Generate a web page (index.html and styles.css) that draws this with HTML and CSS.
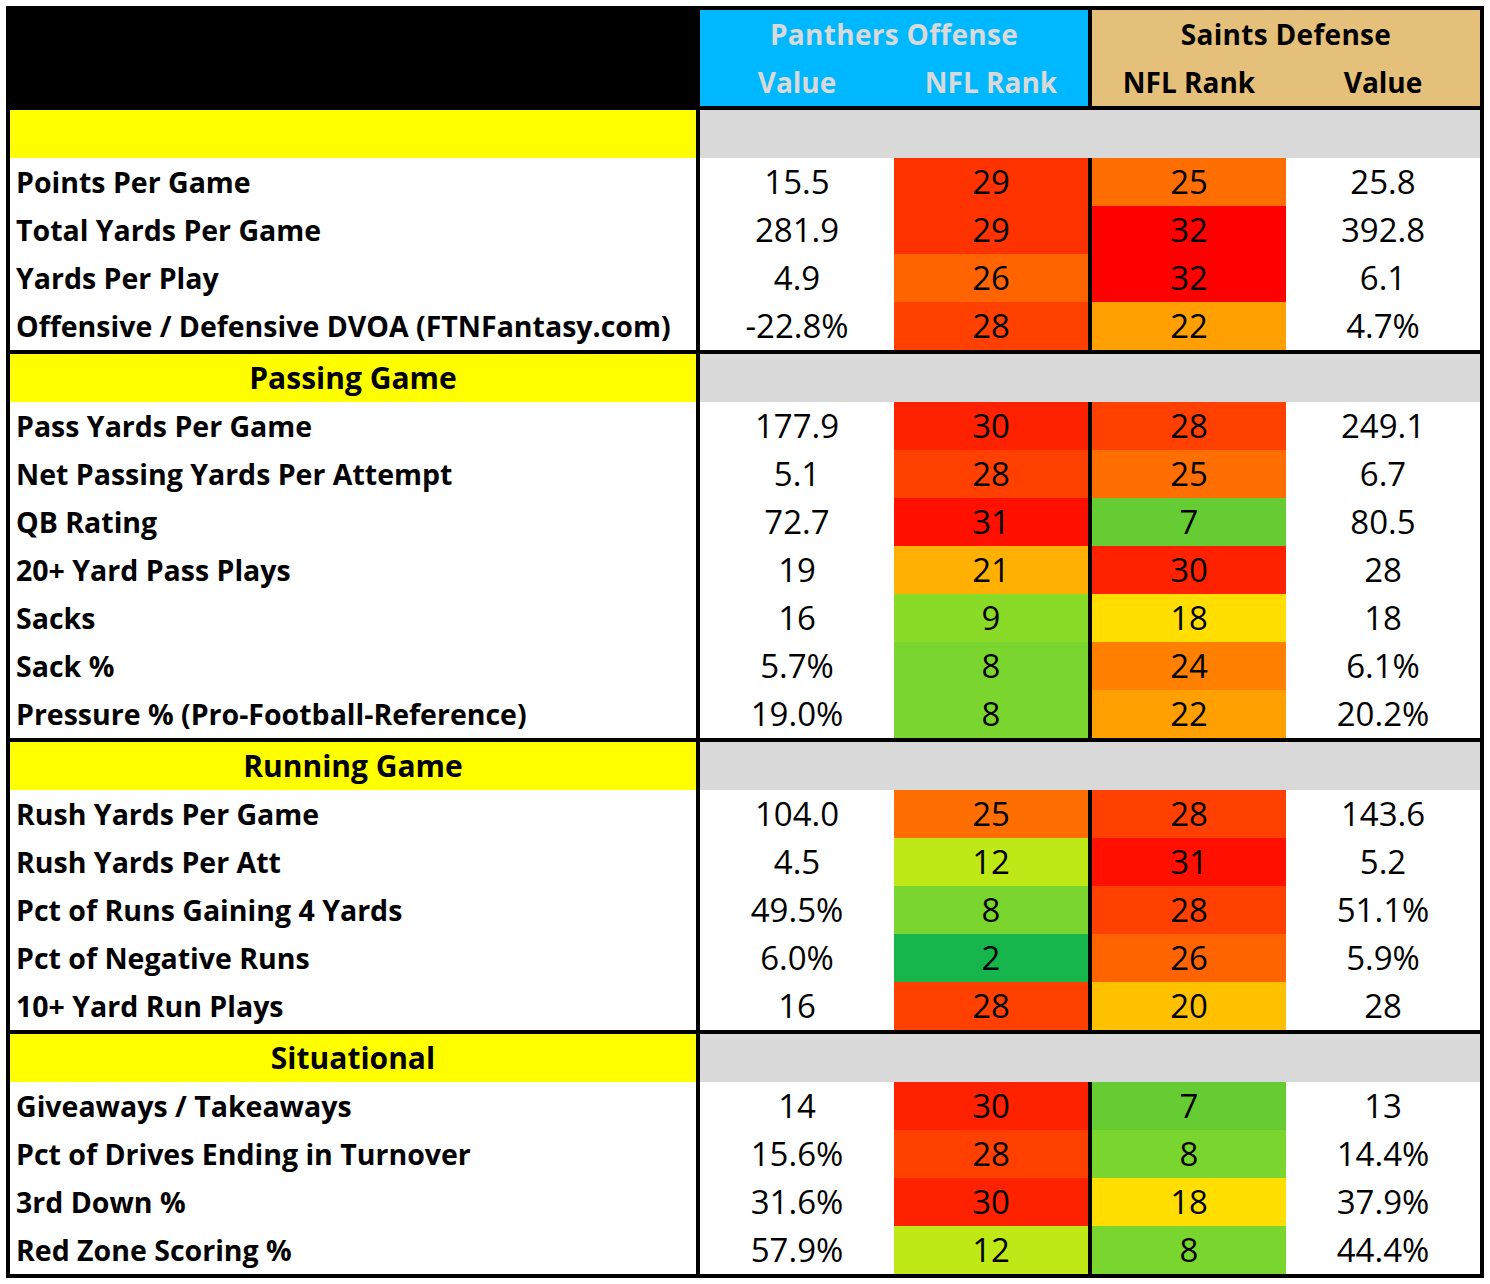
FILE: index.html
```html
<!DOCTYPE html>
<html lang="en">
<head>
<meta charset="utf-8">
<title>Panthers Offense vs Saints Defense</title>
<link rel="stylesheet" href="styles.css">
</head>
<body>
<div class="sheet">
  <div class="band head">
    <div class="corner"></div>
    <div class="off title">Panthers Offense</div>
    <div class="off c-ov">Value</div>
    <div class="off c-or">NFL Rank</div>
    <div class="def title">Saints Defense</div>
    <div class="def c-dr">NFL Rank</div>
    <div class="def c-dv">Value</div>
  </div>

  <div class="band">
    <div class="sec-title"></div><div class="sec-fill"></div>
    <div class="cell lab">Points Per Game</div><div class="cell c-ov">15.5</div><div class="cell c-or rk29">29</div><div class="cell c-dr rk25">25</div><div class="cell c-dv">25.8</div>
    <div class="cell lab">Total Yards Per Game</div><div class="cell c-ov">281.9</div><div class="cell c-or rk29">29</div><div class="cell c-dr rk32">32</div><div class="cell c-dv">392.8</div>
    <div class="cell lab">Yards Per Play</div><div class="cell c-ov">4.9</div><div class="cell c-or rk26">26</div><div class="cell c-dr rk32">32</div><div class="cell c-dv">6.1</div>
    <div class="cell lab">Offensive / Defensive DVOA (FTNFantasy.com)</div><div class="cell c-ov">-22.8%</div><div class="cell c-or rk28">28</div><div class="cell c-dr rk22">22</div><div class="cell c-dv">4.7%</div>
  </div>

  <div class="band">
    <div class="sec-title">Passing Game</div><div class="sec-fill"></div>
    <div class="cell lab">Pass Yards Per Game</div><div class="cell c-ov">177.9</div><div class="cell c-or rk30">30</div><div class="cell c-dr rk28">28</div><div class="cell c-dv">249.1</div>
    <div class="cell lab">Net Passing Yards Per Attempt</div><div class="cell c-ov">5.1</div><div class="cell c-or rk28">28</div><div class="cell c-dr rk25">25</div><div class="cell c-dv">6.7</div>
    <div class="cell lab">QB Rating</div><div class="cell c-ov">72.7</div><div class="cell c-or rk31">31</div><div class="cell c-dr rk7">7</div><div class="cell c-dv">80.5</div>
    <div class="cell lab">20+ Yard Pass Plays</div><div class="cell c-ov">19</div><div class="cell c-or rk21">21</div><div class="cell c-dr rk30">30</div><div class="cell c-dv">28</div>
    <div class="cell lab">Sacks</div><div class="cell c-ov">16</div><div class="cell c-or rk9">9</div><div class="cell c-dr rk18">18</div><div class="cell c-dv">18</div>
    <div class="cell lab">Sack %</div><div class="cell c-ov">5.7%</div><div class="cell c-or rk8">8</div><div class="cell c-dr rk24">24</div><div class="cell c-dv">6.1%</div>
    <div class="cell lab">Pressure % (Pro-Football-Reference)</div><div class="cell c-ov">19.0%</div><div class="cell c-or rk8">8</div><div class="cell c-dr rk22">22</div><div class="cell c-dv">20.2%</div>
  </div>

  <div class="band">
    <div class="sec-title">Running Game</div><div class="sec-fill"></div>
    <div class="cell lab">Rush Yards Per Game</div><div class="cell c-ov">104.0</div><div class="cell c-or rk25">25</div><div class="cell c-dr rk28">28</div><div class="cell c-dv">143.6</div>
    <div class="cell lab">Rush Yards Per Att</div><div class="cell c-ov">4.5</div><div class="cell c-or rk12">12</div><div class="cell c-dr rk31">31</div><div class="cell c-dv">5.2</div>
    <div class="cell lab">Pct of Runs Gaining 4 Yards</div><div class="cell c-ov">49.5%</div><div class="cell c-or rk8">8</div><div class="cell c-dr rk28">28</div><div class="cell c-dv">51.1%</div>
    <div class="cell lab">Pct of Negative Runs</div><div class="cell c-ov">6.0%</div><div class="cell c-or rk2">2</div><div class="cell c-dr rk26">26</div><div class="cell c-dv">5.9%</div>
    <div class="cell lab">10+ Yard Run Plays</div><div class="cell c-ov">16</div><div class="cell c-or rk28">28</div><div class="cell c-dr rk20">20</div><div class="cell c-dv">28</div>
  </div>

  <div class="band">
    <div class="sec-title">Situational</div><div class="sec-fill"></div>
    <div class="cell lab">Giveaways / Takeaways</div><div class="cell c-ov">14</div><div class="cell c-or rk30">30</div><div class="cell c-dr rk7">7</div><div class="cell c-dv">13</div>
    <div class="cell lab">Pct of Drives Ending in Turnover</div><div class="cell c-ov">15.6%</div><div class="cell c-or rk28">28</div><div class="cell c-dr rk8">8</div><div class="cell c-dv">14.4%</div>
    <div class="cell lab">3rd Down %</div><div class="cell c-ov">31.6%</div><div class="cell c-or rk30">30</div><div class="cell c-dr rk18">18</div><div class="cell c-dv">37.9%</div>
    <div class="cell lab">Red Zone Scoring %</div><div class="cell c-ov">57.9%</div><div class="cell c-or rk12">12</div><div class="cell c-dr rk8">8</div><div class="cell c-dv">44.4%</div>
  </div>
</div>
</body>
</html>
```

FILE: styles.css
```css
html, body {
  margin: 0;
  background: #ffffff;
}
body {
  padding: 6px;
  font-family: "Open Sans", "Liberation Sans", sans-serif;
  color: #000;
}
.sheet {
  width: 1478px;
  box-sizing: border-box;
  background: #000;
  padding: 4px;
  display: flex;
  flex-direction: column;
  gap: 4px;
}
.band {
  display: grid;
  grid-template-columns: 686px 4px 194px 194px 4px 194px 194px;
  grid-auto-rows: 48px;
}
.head {
  grid-template-rows: 48px 48px;
}
.corner {
  grid-column: 1 / 3;
  grid-row: 1 / 3;
  background: #000;
}
.off, .def {
  font-size: 28px;
  font-weight: 700;
  line-height: 48px;
  text-align: center;
  grid-row: 2;
  white-space: nowrap;
}
.off {
  background: #00b8ff;
  color: #d9d9d9;
}
.def {
  background: #e5c07b;
  color: #000;
}
.off.title {
  grid-column: 3 / 5;
  grid-row: 1;
  letter-spacing: 0.3px;
}
.def.title {
  grid-column: 6 / 8;
  grid-row: 1;
  letter-spacing: 0.3px;
}
.c-ov { grid-column: 3; }
.c-or { grid-column: 4; }
.c-dr { grid-column: 6; }
.c-dv { grid-column: 7; }

.cell {
  background: #fff;
  font-size: 33px;
  line-height: 48px;
  text-align: center;
  white-space: nowrap;
}
.lab {
  grid-column: 1;
  text-align: left;
  font-size: 28.5px;
  font-weight: 700;
  padding-left: 6px;
}
.sec-title {
  grid-column: 1;
  background: #ffff00;
  font-size: 30px;
  font-weight: 700;
  line-height: 48px;
  text-align: center;
}
.sec-fill {
  grid-column: 3 / 8;
  background: #d9d9d9;
}

.rk2 { background: #16b64c; }
.rk7 { background: #66cc33; }
.rk8 { background: #7ad62e; }
.rk9 { background: #8ada28; }
.rk12 { background: #bee916; }
.rk18 { background: #ffde00; }
.rk20 { background: #ffc000; }
.rk21 { background: #ffb000; }
.rk22 { background: #ffa000; }
.rk24 { background: #ff8000; }
.rk25 { background: #ff6e00; }
.rk26 { background: #ff6400; }
.rk28 { background: #ff4000; }
.rk29 { background: #ff3300; }
.rk30 { background: #ff2200; }
.rk31 { background: #ff1000; }
.rk32 { background: #ff0000; }
```
